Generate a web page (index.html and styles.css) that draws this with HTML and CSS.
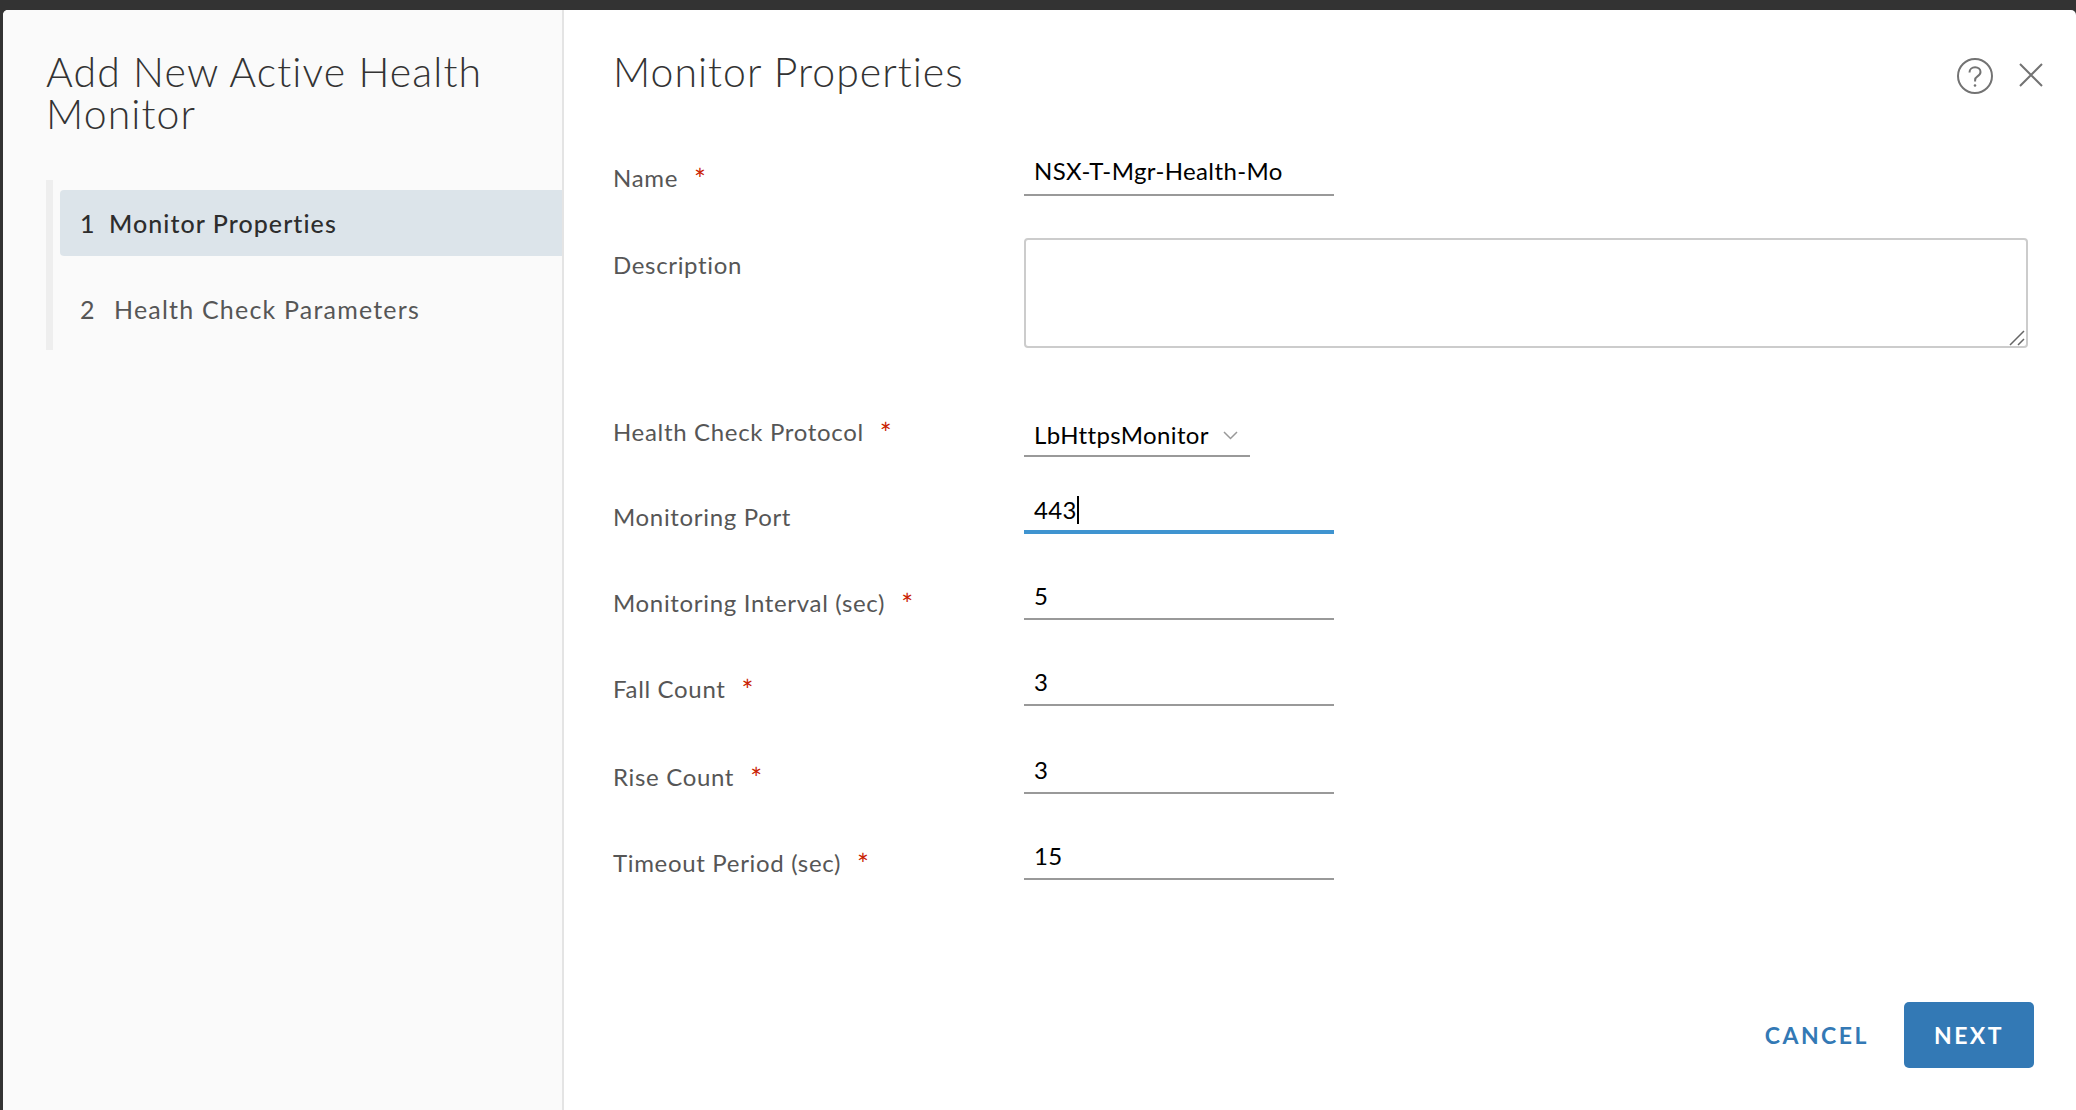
FILE: index.html
```html
<!DOCTYPE html>
<html lang="en">
<head>
  <meta charset="UTF-8">
  <title>Add New Active Health Monitor</title>
  <link rel="stylesheet" href="styles.css">
</head>
<body>
  <div class="modal">
    <!-- Wizard steps -->
    <aside class="side">
      <h1 class="wizard-title">Add New Active Health Monitor</h1>
      <ol class="steps">
        <li class="step step-active"><span class="step-num">1</span>Monitor Properties</li>
        <li class="step"><span class="step-num">2</span>Health Check Parameters</li>
      </ol>
    </aside>

    <main class="main">
      <header class="main-head">
        <h2 class="page-title">Monitor Properties</h2>
        <div class="head-icons">
          <svg class="icon-help" width="36" height="36" viewBox="0 0 36 36" fill="none" stroke="#737373">
            <circle cx="18" cy="18" r="17" stroke-width="2"/>
            <path d="M12.500 14.500c0-3.200 2.500-5.200 5.600-5.200 3 0 5.400 1.900 5.400 4.700 0 2.200-1.300 3.300-3 4.400-1.600 1-2.400 2-2.400 3.800v1.300" stroke-width="2"/>
            <circle cx="18" cy="27.500" r="1.300" fill="#737373" stroke="none"/>
          </svg>
          <svg class="icon-close" width="24" height="24" viewBox="0 0 24 24" fill="none" stroke="#737373" stroke-width="2">
            <path d="M1 1l22 22M23 1L1 23"/>
          </svg>
        </div>
      </header>

      <form class="form">
        <div class="row row-name">
          <div class="label">Name<span class="req">*</span></div>
          <div class="field">NSX-T-Mgr-Health-Mo</div>
        </div>
        <div class="row row-desc">
          <div class="label">Description</div>
          <div class="desc-wrap">
            <textarea class="desc"></textarea>
            <svg class="grip" width="16" height="16" viewBox="0 0 16 16" fill="none" stroke="#666" stroke-width="1.500">
              <path d="M1 15L15 1M9 15l6-6"/>
            </svg>
          </div>
        </div>
        <div class="row row-protocol">
          <div class="label">Health Check Protocol<span class="req">*</span></div>
          <div class="field field-select">LbHttpsMonitor
            <svg width="15" height="9" viewBox="0 0 15 9" fill="none" stroke="#999" stroke-width="1.500"><path d="M1 1l6.500 6.500L14 1"/></svg>
          </div>
        </div>
        <div class="row row-port">
          <div class="label">Monitoring Port</div>
          <div class="field field-focus">443<span class="caret"></span></div>
        </div>
        <div class="row">
          <div class="label">Monitoring Interval (sec)<span class="req">*</span></div>
          <div class="field">5</div>
        </div>
        <div class="row">
          <div class="label">Fall Count<span class="req">*</span></div>
          <div class="field">3</div>
        </div>
        <div class="row row-tall">
          <div class="label">Rise Count<span class="req">*</span></div>
          <div class="field">3</div>
        </div>
        <div class="row">
          <div class="label">Timeout Period (sec)<span class="req">*</span></div>
          <div class="field">15</div>
        </div>
      </form>

      <footer class="actions">
        <button class="btn btn-link" type="button">CANCEL</button>
        <button class="btn btn-primary" type="button">NEXT</button>
      </footer>
    </main>
  </div>
</body>
</html>
```

FILE: styles.css
```css
html, body {
  height: 100%;
}

body {
  margin: 0;
  overflow: hidden;
  background: #333;
  font-family: "Lato", "Open Sans", sans-serif;
  color: #565656;
}

.modal {
  display: flex;
  height: 1110px;
  margin: 10px 0 0 3px;
  background: #fff;
  border-radius: 5px;
  overflow: hidden;
}

/* Left column with the wizard steps */
.side {
  width: 561px;
  flex-shrink: 0;
  box-sizing: border-box;
  background: #fafafa;
  border-right: 2px solid #e4e4e4;
  padding: 41px 0 0 43px;
}

.wizard-title {
  width: 500px;
  margin: 0 0 45px;
  font-size: 41px;
  line-height: 42px;
  font-weight: 300;
  letter-spacing: 1.100px;
  color: #333;
}

.steps {
  list-style: none;
  margin: 0;
  padding: 10px 0 10px 7px;
  height: 150px;
  border-left: 7px solid #eee;
}

.step {
  display: flex;
  align-items: center;
  height: 66px;
  padding-left: 20px;
  font-size: 25px;
  letter-spacing: 1.200px;
  color: #565656;
}

.step + .step {
  margin-top: 20px;
}

.step-active {
  background: #dce4ea;
  border-radius: 4px 0 0 4px;
  color: #2d2d2d;
  font-weight: 500;
  letter-spacing: 1.050px;
}

.step-active .step-num {
  width: 29px;
}

.step-num {
  width: 34px;
}

/* Right column */
.main {
  flex: 1;
  display: flex;
  flex-direction: column;
  padding: 0 47px 0 49px;
}

.main-head {
  display: flex;
  justify-content: space-between;
  height: 109px;
}

.page-title {
  margin: 41px 0 0;
  font-size: 41px;
  line-height: 42px;
  font-weight: 300;
  letter-spacing: 1px;
  color: #333;
}

.head-icons {
  display: flex;
  align-items: flex-start;
  gap: 26px;
  margin: 48px -14px 0 0;
}

.icon-close {
  margin-top: 5px;
}

.form {
  display: flex;
  flex-direction: column;
}

.row {
  display: flex;
  align-items: flex-end;
  height: 86px;
}

.row-name {
  height: 77px;
}

.row-desc {
  height: 151px;
  align-items: flex-start;
  padding-top: 42px;
  box-sizing: border-box;
}

.row-protocol {
  height: 110px;
}

.row-port {
  height: 77px;
}

.row-tall {
  height: 88px;
}

.label {
  width: 411px;
  flex-shrink: 0;
  margin-bottom: 2px;
  font-size: 24px;
  line-height: 30px;
  letter-spacing: 0.670px;
}

.row-name .label {
  margin-bottom: 3px;
}

.row-protocol .label {
  margin-bottom: 10px;
}

.row-desc .label {
  margin-top: 12px;
}

.req {
  margin-left: 16px;
  color: #c92100;
  font-size: 28px;
  line-height: 20px;
  vertical-align: -3px;
}

.field {
  display: flex;
  align-items: center;
  width: 310px;
  height: 42px;
  box-sizing: border-box;
  padding: 0 0 4px 10px;
  border-bottom: 2px solid #999;
  font-size: 24px;
  line-height: 32px;
  letter-spacing: 0.380px;
  color: #000;
}

.row-name .field {
  padding-bottom: 7px;
}

.field-select {
  width: 226px;
  gap: 14px;
  padding-bottom: 0;
}

.field-focus {
  padding-bottom: 2px;
  border-bottom: 4px solid #3f94d0;
}

.caret {
  width: 2px;
  height: 28px;
  background: #000;
}

.desc-wrap {
  position: relative;
}

.desc {
  display: block;
  width: 1004px;
  height: 110px;
  box-sizing: border-box;
  border: 2px solid #ccc;
  border-radius: 4px;
  background: #fff;
  margin: 0;
  padding: 0;
  outline: none;
  resize: none;
}

/* textarea resize handle */
.grip {
  position: absolute;
  right: 3px;
  bottom: 2px;
}

.actions {
  display: flex;
  align-items: center;
  justify-content: flex-end;
  gap: 35px;
  margin-top: 122px;
  margin-right: -5px;
}

.btn {
  border: 0;
  padding: 0;
  font-family: inherit;
  font-size: 23px;
  font-weight: 700;
  letter-spacing: 2.500px;
}

.btn-link {
  background: none;
  color: #3379b5;
}

.btn-primary {
  width: 130px;
  height: 66px;
  background: #3379b5;
  border-radius: 5px;
  color: #fff;
}
```
